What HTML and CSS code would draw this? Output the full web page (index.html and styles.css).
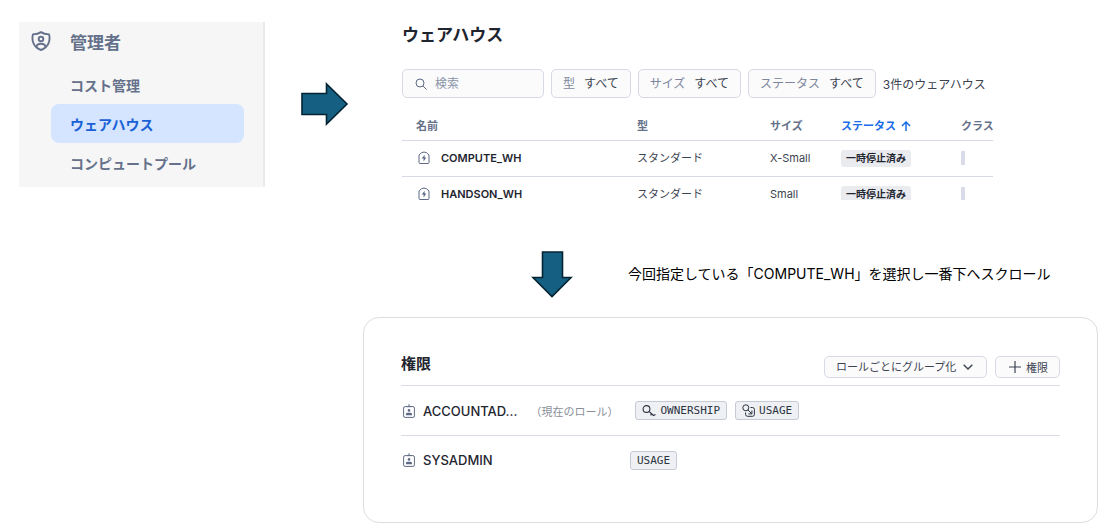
FILE: index.html
```
<!DOCTYPE html>
<html lang="ja">
<head>
  <meta charset="UTF-8">
  <title>ウェアハウス</title>
  <link rel="stylesheet" href="styles.css">
</head>
<body>

<svg class="defs" width="0" height="0">
  <symbol id="wh" viewBox="0 0 12 13">
    <path d="M1 4 3.400 1.800Q6 .200 8.600 1.800L11 4V11.500a1 1 0 0 1-1 1H2a1 1 0 0 1-1-1z" fill="none" stroke="currentColor"/>
    <path d="M6.600 3.800 3.800 7.600h1.800v2.800l2.700-4H6.600z" fill="currentColor"/>
  </symbol>
  <symbol id="role" viewBox="0 0 12 14">
    <rect x=".6" y="2.6" width="10.8" height="10.8" rx="1.5" fill="none" stroke="currentColor"/>
    <path d="M6 .2V3M3.8 2.6h4.4" stroke="currentColor" fill="none"/>
    <circle cx="6" cy="6.4" r="1.3" fill="currentColor"/>
    <path d="M3 11.2V10q0-1.2 1.5-1.2h3Q9 8.800 9 10v1.200z" fill="currentColor"/>
  </symbol>
</svg>

<div class="top">
  <nav class="side">
    <h2>
      <svg width="20" height="20" viewBox="0 0 20 20" fill="none" stroke="currentColor" stroke-width="1.900">
        <path d="M10 1.100C7.800 2.600 5 3.200 1.900 3.400c-1.500 6.500.800 13.100 8.100 15.600 7.300-2.500 9.600-9.100 8.100-15.600-3.100-.200-5.900-.800-8.100-2.300z" stroke-linejoin="round"/>
        <circle cx="10" cy="8" r="2.300"/>
        <path d="M5.500 16c.300-2.400 1.800-3.200 4.500-3.200s4.200.800 4.500 3.200"/>
      </svg>
      管理者
    </h2>
    <a href="#">コスト管理</a>
    <a href="#" class="active">ウェアハウス</a>
    <a href="#">コンピュートプール</a>
  </nav>

  <svg class="right" width="48" height="44" viewBox="0 0 48 44">
    <path d="M1 11.500H25.500V2L46 22 25.500 42V32.500H1z" fill="#156082" stroke="#042433" stroke-width="1.600"/>
  </svg>

  <main class="warehouses">
    <h1>ウェアハウス</h1>
    <div class="filters">
      <div class="search">
        <svg width="12" height="12" viewBox="0 0 12 12" fill="none" stroke="#5d6a85">
          <circle cx="5" cy="5" r="4"/><path d="M8 8l3.500 3.500"/>
        </svg>
        <input type="text" placeholder="検索" aria-label="検索">
      </div>
      <button><span>型</span>すべて</button>
      <button><span>サイズ</span>すべて</button>
      <button><span>ステータス</span>すべて</button>
      <p>3件のウェアハウス</p>
    </div>
    <div class="list">
      <table>
        <thead>
          <tr>
            <th>名前</th>
            <th class="c-type">型</th>
            <th class="c-size">サイズ</th>
            <th class="c-status sorted">ステータス
              <svg width="10" height="10" viewBox="0 0 10 10" fill="none" stroke="currentColor" stroke-width="1.500"><path d="M5 10V1M1 5l4-4 4 4"/></svg>
            </th>
            <th class="c-class">クラス</th>
          </tr>
        </thead>
        <tbody>
          <tr>
            <td class="name"><svg width="12" height="13"><use href="#wh"/></svg>COMPUTE_WH</td>
            <td>スタンダード</td>
            <td>X-Small</td>
            <td><span class="status">一時停止済み</span></td>
            <td><i class="bar"></i></td>
          </tr>
          <tr>
            <td class="name"><svg width="12" height="13"><use href="#wh"/></svg>HANDSON_WH</td>
            <td>スタンダード</td>
            <td>Small</td>
            <td><span class="status">一時停止済み</span></td>
            <td><i class="bar"></i></td>
          </tr>
        </tbody>
      </table>
    </div>
  </main>
</div>

<div class="step">
  <svg width="42" height="48" viewBox="0 0 42 48">
    <path d="M11.500 1H31.500V26.500H40L21 45.500 2 26.500H11.500z" fill="#156082" stroke="#042433" stroke-width="1.600"/>
  </svg>
  <p>今回指定している「COMPUTE_WH」を選択し一番下へスクロール</p>
</div>

<section class="card">
  <header>
    <h2>権限</h2>
    <div class="group">
      <select aria-label="グループ化">
        <option>ロールごとにグループ化</option>
      </select>
      <svg width="10" height="6" viewBox="0 0 10 6" fill="none" stroke="#3b4351" stroke-width="1.400"><path d="M.700.700 5 5 9.300.700"/></svg>
    </div>
    <button>
      <svg width="12" height="12" viewBox="0 0 12 12" stroke="#3b4351" stroke-width="1.200"><path d="M6 0v12M0 6h12"/></svg>
      権限
    </button>
  </header>
  <ul>
    <li>
      <div class="role">
        <svg width="12" height="14"><use href="#role"/></svg>
        <b>ACCOUNTAD...</b>
        <small>（現在のロール）</small>
      </div>
      <span class="tag">
        <svg width="14" height="12" viewBox="0 0 14 12" fill="none" stroke="currentColor" stroke-width="1.100"><circle cx="4.500" cy="4" r="3.400"/><path d="M7 6.400 11.500 10.500 13.500 9.500M9 8.400v2.100"/></svg>
        OWNERSHIP
      </span>
      <span class="tag">
        <svg width="13" height="13" viewBox="0 0 13 13" fill="none" stroke="currentColor"><circle cx="3.800" cy="3.800" r="3"/><path d="M8.500 3.500h2q1.900 0 1.900 1.900v5q0 1.900-1.900 1.900h-5q-1.900 0-1.900-1.900V8.500M5.800 5.800l4 4M6.500 9.900h3.400V6.500"/></svg>
        USAGE
      </span>
    </li>
    <li>
      <div class="role">
        <svg width="12" height="14"><use href="#role"/></svg>
        <b>SYSADMIN</b>
      </div>
      <span class="tag">USAGE</span>
    </li>
  </ul>
</section>

</body>
</html>
```

FILE: styles.css
```
* {
  box-sizing: border-box;
}
body {
  margin: 0;
  padding: 22px 18px 6px 19px;
  background: white;
  color: #1e252f;
  font-family: Inter, "Noto Sans CJK JP", sans-serif;
  font-size: 12px;
}
h1, h2, p, ul {
  margin: 0;
  padding: 0;
}
svg {
  flex: none;
}
.defs {
  position: absolute;
}
input, button, select {
  font-family: inherit;
}
.top {
  display: flex;
  align-items: flex-start;
}

/* left menu */
.side {
  width: 246px;
  height: 165px;
  padding: 7px 19px 0 12px;
  background: #f6f6f6;
  border-right: 2px solid #e9eaed;
  color: #65718a;
}
.side h2 {
  display: flex;
  align-items: center;
  gap: 19px;
  height: 24px;
  margin-bottom: 12px;
  font-size: 17px;
  font-weight: 700;
}
.side a {
  display: flex;
  align-items: center;
  height: 39px;
  margin-left: 20px;
  padding-left: 19px;
  border-radius: 8px;
  color: #65718a;
  font-size: 14px;
  font-weight: 700;
  text-decoration: none;
}
.side .active {
  background: #d5e5ff;
  color: #1a60d6;
}
.right {
  margin: 60px 53px 0 36px;
}

/* warehouse list */
.warehouses {
  flex: 1;
  margin-right: 105px;
}
h1 {
  height: 26px;
  line-height: 26px;
  font-size: 17px;
  font-weight: 700;
}
.filters {
  display: flex;
  align-items: center;
  gap: 7px;
  margin: 21px 0 13px;
  white-space: nowrap;
}
.search, .filters button {
  height: 29px;
  background: #fbfbfc;
  border: 1px solid #d5dae4;
  border-radius: 5px;
}
.search {
  display: flex;
  align-items: center;
  gap: 8px;
  width: 142px;
  padding: 0 12px;
}
.search input {
  width: 90px;
  padding: 0;
  border: none;
  outline: none;
  background: transparent;
  font-size: 12px;
}
.search input::placeholder {
  color: #8a94a8;
}
.filters button {
  padding: 0 11px 2px;
  color: #3b4351;
  font-size: 12px;
}
.filters button span {
  margin-right: 9px;
  color: #7d879c;
}
.filters p {
  color: #3b4351;
}
.list {
  height: 89px;
  overflow: hidden;
}
table {
  width: 100%;
  border-collapse: collapse;
  table-layout: fixed;
}
th, td {
  height: 36px;
  padding: 0;
  border-bottom: 1px solid #d5dae4;
  line-height: 13px;
  text-align: left;
  font-size: 11px;
  white-space: nowrap;
}
th {
  height: 29px;
  padding-top: 2px;
  color: #65718a;
  font-weight: 700;
}
td {
  color: #3b4351;
}
th:first-child {
  padding-left: 14px;
}
.c-type {
  width: 133px;
}
.c-size {
  width: 71px;
}
.c-status {
  width: 120px;
}
.c-class {
  width: 32px;
}
.sorted {
  color: #1a6ce7;
}
.sorted svg {
  margin-left: 2px;
  vertical-align: -1px;
}
.name {
  padding-left: 16px;
  color: #1e252f;
  font-weight: 600;
}
.name svg {
  margin-right: 11px;
  color: #5d6a85;
  vertical-align: -2px;
}
.status {
  display: inline-block;
  height: 17px;
  line-height: 17px;
  padding: 0 5px;
  border-radius: 3px;
  background: #e9ebef;
  color: #1e252f;
  font-size: 10px;
  font-weight: 700;
  vertical-align: middle;
}
.bar {
  display: block;
  width: 4px;
  height: 14px;
  background: #d9dbe8;
}

.step {
  display: flex;
  align-items: center;
  gap: 55px;
  margin: 51px 0 18px 512px;
  color: black;
  font-size: 14px;
}
.step p {
  padding-bottom: 4px;
}

/* privileges */
.card {
  min-height: 206px;
  margin-left: 344px;
  padding: 30px 37px;
  border: 1px solid #dcdde1;
  border-radius: 16px;
}
.card header {
  display: flex;
  align-items: center;
  gap: 8px;
  height: 38px;
  border-bottom: 1px solid #d9dce2;
}
.card h2 {
  flex: 1;
  height: 32px;
  line-height: 26px;
  font-size: 15px;
  font-weight: 700;
}
.card select, .card button {
  height: 22px;
  border: 1px solid #d5dae4;
  border-radius: 5px;
  background: #fbfbfc;
  color: #3b4351;
  font-size: 11px;
}
.card select {
  width: 163px;
  padding: 0 11px;
  appearance: none;
}
.group {
  position: relative;
}
.group svg {
  position: absolute;
  right: 14px;
  top: 8px;
}
.card button {
  display: flex;
  align-items: center;
  gap: 5px;
  padding: 0 11px 0 13px;
}
.card ul {
  list-style: none;
}
.card li {
  display: flex;
  align-items: center;
  gap: 8px;
  height: 49px;
}
.card li + li {
  border-top: 1px solid #d9dce2;
}
.role {
  display: flex;
  align-items: center;
  min-width: 221px;
  padding-left: 2px;
}
.role svg {
  margin-right: 8px;
  color: #5d6a85;
}
.role b {
  font-size: 13px;
  font-weight: 500;
}
.role small {
  margin: 0 9px 0 13px;
  color: #8a8f99;
  font-size: 11px;
}
.tag {
  display: flex;
  align-items: center;
  gap: 4px;
  height: 19px;
  padding: 0 6px;
  border: 1px solid #c5cad6;
  border-radius: 3px;
  background: #eef0f4;
  color: #2c3440;
  font-family: "DejaVu Sans Mono", monospace;
  font-size: 11px;
}
```
